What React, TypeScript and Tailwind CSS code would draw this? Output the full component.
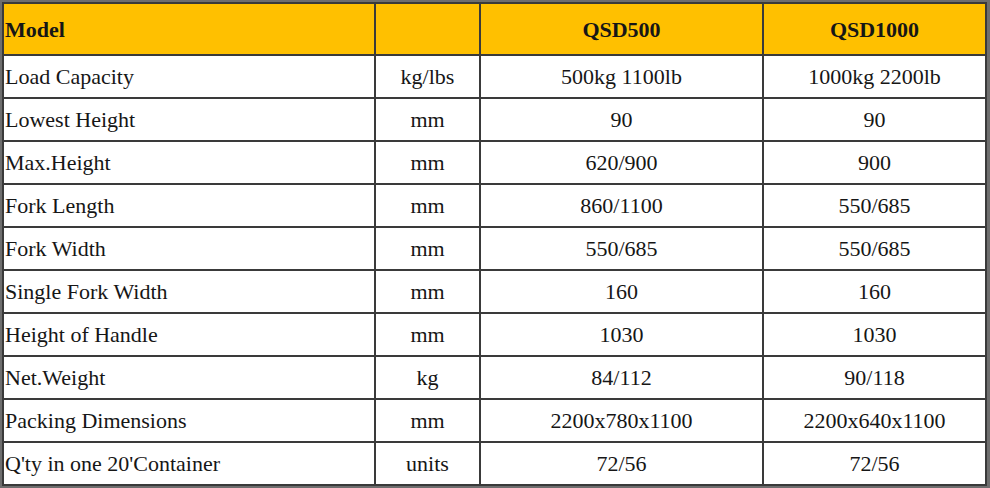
const rows: [string, string, string, string][] = [
  ['Load Capacity', 'kg/lbs', '500kg 1100lb', '1000kg 2200lb'],
  ['Lowest Height', 'mm', '90', '90'],
  ['Max.Height', 'mm', '620/900', '900'],
  ['Fork Length', 'mm', '860/1100', '550/685'],
  ['Fork Width', 'mm', '550/685', '550/685'],
  ['Single Fork Width', 'mm', '160', '160'],
  ['Height of Handle', 'mm', '1030', '1030'],
  ['Net.Weight', 'kg', '84/112', '90/118'],
  ['Packing Dimensions', 'mm', '2200x780x1100', '2200x640x1100'],
  ["Q'ty in one 20'Container", 'units', '72/56', '72/56'],
];

const cell = 'border-2 border-[#3a3a3a] p-0 align-middle';

export default function App() {
  return (
    <div className="w-[990px] h-[488px] bg-[#6e6e6e] pt-[2px] pl-[2px] pr-[3px] pb-[2px] font-['Liberation_Serif',serif] text-[22px] text-[#161616]">
      <table className="w-full h-full table-fixed border-collapse bg-white">
        <colgroup>
          <col className="w-[372px]" />
          <col className="w-[105px]" />
          <col className="w-[283px]" />
          <col className="w-[223px]" />
        </colgroup>
        <thead>
          <tr className="h-[52px] bg-[#ffc000] font-bold">
            <th className={`${cell} text-left pl-[1px]`}>Model</th>
            <th className={cell}></th>
            <th className={`${cell} text-center`}>QSD500</th>
            <th className={`${cell} text-center`}>QSD1000</th>
          </tr>
        </thead>
        <tbody>
          {rows.map((r) => (
            <tr key={r[0]} className="h-[43px]">
              <td className={`${cell} text-left pl-[1px]`}>{r[0]}</td>
              <td className={`${cell} text-center`}>{r[1]}</td>
              <td className={`${cell} text-center`}>{r[2]}</td>
              <td className={`${cell} text-center`}>{r[3]}</td>
            </tr>
          ))}
        </tbody>
      </table>
    </div>
  );
}
